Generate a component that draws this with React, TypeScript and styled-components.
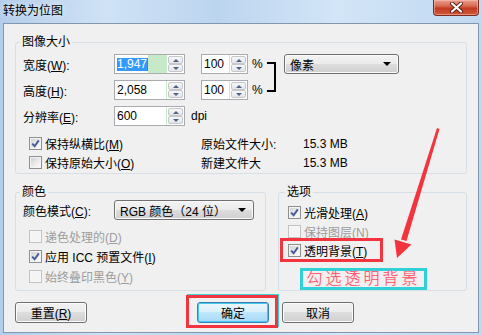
import React from 'react';
import styled, {createGlobalStyle, css} from 'styled-components';

const GlobalStyle = createGlobalStyle`
  html, body {
    margin: 0;
    padding: 0;
  }
  body {
    font-family: "Liberation Sans", "Noto Sans CJK SC", sans-serif;
    font-size: 12px;
    color: #000;
  }
`

const RED = '#f2343e';

const Window = styled.div`
  position: relative;
  width: 482px;
  height: 335px;
  display: flex;
  flex-direction: column;
  overflow: hidden;
  background: linear-gradient(90deg, #b3cdea 0%, #cfe2f6 22%, #bcd5ef 45%, #d3e5f7 70%, #c0d8f0 100%);
`

const TitleBar = styled.div`
  height: 23px;
  flex-shrink: 0;
  display: flex;
  align-items: flex-start;
`

const Title = styled.div`
  padding: 3px 0 0 3px;
  line-height: 16px;
  font-size: 12px;
  text-shadow: 0 0 6px rgba(255, 255, 255, 0.9);
`

const CloseButton = styled.div`
  margin-left: auto;
  margin-right: 3px;
  width: 46px;
  height: 16px;
  box-sizing: border-box;
  border: 1px solid #7a2c22;
  border-top: none;
  border-radius: 0 0 4px 4px;
  background: linear-gradient(#e9a08f 0%, #d86a52 40%, #c23a22 55%, #d0583a 100%);
  box-shadow: inset 0 0 0 1px rgba(255, 200, 190, 0.5);
  display: flex;
  align-items: center;
  justify-content: center;
`

const Client = styled.div`
  flex: 1;
  margin: 0 3px 2px 3px;
  border: 1px solid #8296ad;
  background: #f0f0f0;
  padding: 11px 11px 0 11px;
  display: flex;
  flex-direction: column;
`

const Group = styled.fieldset<{ $pad: string; $width?: number; $grow?: boolean }>`
  margin: 0;
  min-width: 0;
  border: 1px solid #d5dfe5;
  border-radius: 3px;
  padding: ${p => p.$pad};
  flex: ${p => p.$grow ? '1' : 'none'};
  ${p => p.$width && css`width: ${p.$width}px;`}
  box-sizing: border-box;
`

const Legend = styled.legend`
  margin-left: -3px;
  padding: 0 2px;
  line-height: 14px;
  font-size: 12px;
`

const SizeGrid = styled.div`
  display: grid;
  grid-template-columns: 91px 71px 16px 47px 19px 10px 7px 115px;
  grid-template-rows: repeat(3, 20px);
  grid-template-areas:
    "wl wf . wp ws br . unit"
    "hl hf . hp hs br . ."
    "rl rf dpi dpi dpi . . .";
  row-gap: 6px;
`

const Cell = styled.div<{ $area: string; $indent?: number }>`
  grid-area: ${p => p.$area};
  display: flex;
  align-items: center;
  padding-left: ${p => p.$indent ?? 0}px;
  white-space: nowrap;
`

const Bracket = styled.div`
  grid-area: br;
  width: 9px;
  margin: 8px 0 8px 0;
  border: 2px solid #000;
  border-left: none;
  box-sizing: border-box;
`

const InfoGrid = styled.div`
  display: grid;
  grid-template-columns: 178px 102px auto;
  grid-auto-rows: 19px;
  margin-top: 8px;
  white-space: nowrap;
`

const InfoText = styled.div`
  display: flex;
  align-items: center;
`

const Field = styled.div<{ $w: number }>`
  width: ${p => p.$w}px;
  height: 20px;
  box-sizing: border-box;
  display: flex;
  border: 1px solid #a9abb0;
  background: #fff;
`

const FieldText = styled.div`
  flex: 1;
  display: flex;
  align-items: center;
  padding-left: 2px;
  border-right: 1px solid #cbeccb;
  overflow: hidden;
  font-size: 12px;
`

const Selection = styled.span`
  background: #3399ff;
  color: #fff;
  line-height: 13px;
  border-right: 1px solid #b5651d;
`

const Filler = styled.span`
  flex: 1;
  align-self: stretch;
  background: #c6eac8;
`

const Spinner = styled.div`
  width: 17px;
  display: flex;
  flex-direction: column;
  padding: 1px;
  box-sizing: border-box;
`

const SpinButton = styled.div`
  flex: 1;
  border: 1px solid #c5c7cb;
  border-radius: 2px;
  background: linear-gradient(#f7f7f7, #e3e5e8);
  display: flex;
  align-items: center;
  justify-content: center;
`

const Tri = styled.span<{ $down?: boolean }>`
  width: 0;
  height: 0;
  border-left: 3px solid transparent;
  border-right: 3px solid transparent;
  ${p => p.$down
    ? css`border-top: 3px solid #4d6185;`
    : css`border-bottom: 3px solid #4d6185;`}
`

const Select = styled.div<{ $w: number }>`
  width: ${p => p.$w}px;
  height: 20px;
  box-sizing: border-box;
  border: 1px solid #707070;
  border-radius: 3px;
  background: linear-gradient(#f3f3f3 0%, #ebebeb 50%, #dddddd 51%, #d0d0d0 100%);
  box-shadow: inset 0 0 0 1px #fafafa;
  display: flex;
  align-items: center;
  padding: 0 7px 0 5px;
  white-space: nowrap;
`

const SelectArrow = styled.span`
  margin-left: auto;
  width: 0;
  height: 0;
  border-left: 4px solid transparent;
  border-right: 4px solid transparent;
  border-top: 4px solid #000;
`

const GroupRow = styled.div`
  display: flex;
  gap: 12px;
  margin-top: 11px;
`

const ModeRow = styled.div`
  display: flex;
  align-items: center;
  height: 20px;
`

const ModeLabel = styled.span`
  width: 91px;
`

const CheckList = styled.div<{ $pitch: number; $top: number; $indent: number }>`
  display: grid;
  grid-auto-rows: ${p => p.$pitch}px;
  margin-top: ${p => p.$top}px;
  margin-left: ${p => p.$indent}px;
`

const CheckRow = styled.div<{ $disabled?: boolean; $marked?: boolean }>`
  position: relative;
  display: flex;
  align-items: center;
  gap: 3px;
  white-space: nowrap;
  color: ${p => p.$disabled ? '#9d9d9d' : '#000'};
  ${p => p.$marked && css`
    &::after {
      content: "";
      position: absolute;
      left: -8px;
      top: -3px;
      width: 103px;
      height: 24px;
      box-sizing: border-box;
      border: 3px solid ${RED};
    }
  `}
`

const Box = styled.span<{ $disabled?: boolean }>`
  width: 13px;
  height: 13px;
  box-sizing: border-box;
  flex-shrink: 0;
  border: 1px solid ${p => p.$disabled ? '#c2c2c2' : '#8e8f8f'};
  background: ${p => p.$disabled
    ? '#f4f4f4'
    : 'linear-gradient(135deg, #c9ccd1 0%, #eeeeee 60%, #fbfbfb 100%)'};
  box-shadow: inset 0 0 0 1px ${p => p.$disabled ? '#f7f7f7' : '#f4f4f4'};
  display: flex;
  align-items: center;
  justify-content: center;
`

const Callout = styled.div`
  margin: 8px 0 0 12px;
  width: 127px;
  height: 22px;
  box-sizing: border-box;
  border: 3px solid #2fd1d6;
  display: flex;
  align-items: center;
  justify-content: center;
  font-size: 16px;
  line-height: 16px;
  letter-spacing: 3px;
  font-weight: 300;
  color: #ff4d63;
  text-shadow: 0 0 1px #ffb3bd;
  white-space: nowrap;
`

const ButtonBar = styled.div`
  display: flex;
  align-items: center;
  margin-top: 11px;
`

const ButtonGroup = styled.div`
  display: flex;
  gap: 13px;
  margin-left: 110px;
`

const Button = styled.button<{ $default?: boolean; $marked?: boolean }>`
  position: relative;
  width: 72px;
  height: 21px;
  box-sizing: border-box;
  padding: 0;
  font: inherit;
  font-size: 12px;
  color: #000;
  border: 1px solid #707070;
  border-radius: 3px;
  background: linear-gradient(#f2f2f2 0%, #ebebeb 49%, #dddddd 50%, #cfcfcf 100%);
  box-shadow: inset 0 0 0 1px #fbfbfb;
  ${p => p.$default && css`
    border-color: #3c7fb1;
    background: linear-gradient(#eaf6fd 0%, #d9f0fc 49%, #bee6fd 50%, #a7d9f5 100%);
    box-shadow: inset 0 0 0 1px #48c6f2;
  `}
  ${p => p.$marked && css`
    &::after {
      content: "";
      position: absolute;
      left: -12px;
      top: -8px;
      right: -10px;
      bottom: -6px;
      border: 3px solid ${RED};
      box-shadow: 1px -1px 0 #3fd3d6;
    }
  `}
`

const Overlay = styled.svg`
  position: absolute;
  left: 0;
  top: 0;
  pointer-events: none;
`

function Mnemonic({text, mn, colon}: { text: string, mn: string, colon?: boolean }) {
    return <span>{text}(<u>{mn}</u>){colon ? ':' : ''}</span>
}

function SpinField({value, width, selected}: { value: string, width: number, selected?: boolean }) {
    return (
        <Field $w={width}>
            <FieldText>
                {selected ? <><Selection>{value}</Selection><Filler/></> : value}
            </FieldText>
            <Spinner>
                <SpinButton><Tri/></SpinButton>
                <SpinButton><Tri $down/></SpinButton>
            </Spinner>
        </Field>
    )
}

function CheckItem({label, mn, checked, disabled, marked}: {
    label: string, mn: string, checked?: boolean, disabled?: boolean, marked?: boolean
}) {
    return (
        <CheckRow $disabled={disabled} $marked={marked}>
            <Box $disabled={disabled}>
                {checked && (
                    <svg width="9" height="9" viewBox="0 0 9 9">
                        <path d="M1.2 4.6 L3.6 7.2 L7.8 1.4" fill="none" stroke="#46599a" strokeWidth="1.9"/>
                    </svg>
                )}
            </Box>
            <Mnemonic text={label} mn={mn}/>
        </CheckRow>
    )
}

function App() {
    return (
        <Window>
            <GlobalStyle/>
            <TitleBar>
                <Title>转换为位图</Title>
                <CloseButton>
                    <svg width="13" height="11" viewBox="0 0 13 11">
                        <path d="M2 1.5 L11 9.5 M11 1.5 L2 9.5" stroke="#5a1d14" strokeWidth="4" strokeLinecap="round"/>
                        <path d="M2 1.5 L11 9.5 M11 1.5 L2 9.5" stroke="#fff" strokeWidth="2.2" strokeLinecap="round"/>
                    </svg>
                </CloseButton>
            </TitleBar>

            <Client>
                <Group $pad="5px 0 1px 7px">
                    <Legend>图像大小</Legend>
                    <SizeGrid>
                        <Cell $area="wl"><Mnemonic text="宽度" mn="W" colon/></Cell>
                        <Cell $area="wf"><SpinField value="1,947" width={71} selected/></Cell>
                        <Cell $area="wp"><SpinField value="100" width={47}/></Cell>
                        <Cell $area="ws" $indent={4}>%</Cell>
                        <Bracket/>
                        <Cell $area="unit">
                            <Select $w={115}>像素<SelectArrow/></Select>
                        </Cell>

                        <Cell $area="hl"><Mnemonic text="高度" mn="H" colon/></Cell>
                        <Cell $area="hf"><SpinField value="2,058" width={71}/></Cell>
                        <Cell $area="hp"><SpinField value="100" width={47}/></Cell>
                        <Cell $area="hs" $indent={4}>%</Cell>

                        <Cell $area="rl"><Mnemonic text="分辨率" mn="E" colon/></Cell>
                        <Cell $area="rf"><SpinField value="600" width={71}/></Cell>
                        <Cell $area="dpi" $indent={6}>dpi</Cell>
                    </SizeGrid>

                    <InfoGrid>
                        <CheckList $pitch={19} $top={0} $indent={6}>
                            <CheckItem label="保持纵横比" mn="M" checked/>
                        </CheckList>
                        <InfoText>原始文件大小:</InfoText>
                        <InfoText>15.3 MB</InfoText>
                        <CheckList $pitch={19} $top={0} $indent={6}>
                            <CheckItem label="保持原始大小" mn="O"/>
                        </CheckList>
                        <InfoText>新建文件大</InfoText>
                        <InfoText>15.3 MB</InfoText>
                    </InfoGrid>
                </Group>

                <GroupRow>
                    <Group $pad="1px 0 4px 7px" $width={251}>
                        <Legend>颜色</Legend>
                        <ModeRow>
                            <ModeLabel><Mnemonic text="颜色模式" mn="C" colon/></ModeLabel>
                            <Select $w={140}>RGB 颜色（24 位）<SelectArrow/></Select>
                        </ModeRow>
                        <CheckList $pitch={20} $top={6} $indent={6}>
                            <CheckItem label="递色处理的" mn="D" disabled/>
                            <CheckItem label="应用 ICC 预置文件" mn="I" checked/>
                            <CheckItem label="始终叠印黑色" mn="Y" disabled/>
                        </CheckList>
                    </Group>

                    <Group $pad="4px 0 0 9px" $grow>
                        <Legend>选项</Legend>
                        <CheckList $pitch={19} $top={0} $indent={0}>
                            <CheckItem label="光滑处理" mn="A" checked/>
                            <CheckItem label="保持图层" mn="N" disabled/>
                            <CheckItem label="透明背景" mn="T" checked marked/>
                        </CheckList>
                        <Callout>勾选透明背景</Callout>
                    </Group>
                </GroupRow>

                <ButtonBar>
                    <Button><Mnemonic text="重置" mn="R"/></Button>
                    <ButtonGroup>
                        <Button $default $marked>确定</Button>
                        <Button>取消</Button>
                    </ButtonGroup>
                </ButtonBar>
            </Client>

            <Overlay width="482" height="335" viewBox="0 0 482 335">
                <polygon points="437,128 439.5,129 406.5,241 401,239.5" fill={RED}/>
                <polygon points="394.5,239.5 411.5,244.5 397,258" fill={RED}/>
            </Overlay>
        </Window>
    );
}

export default App;
